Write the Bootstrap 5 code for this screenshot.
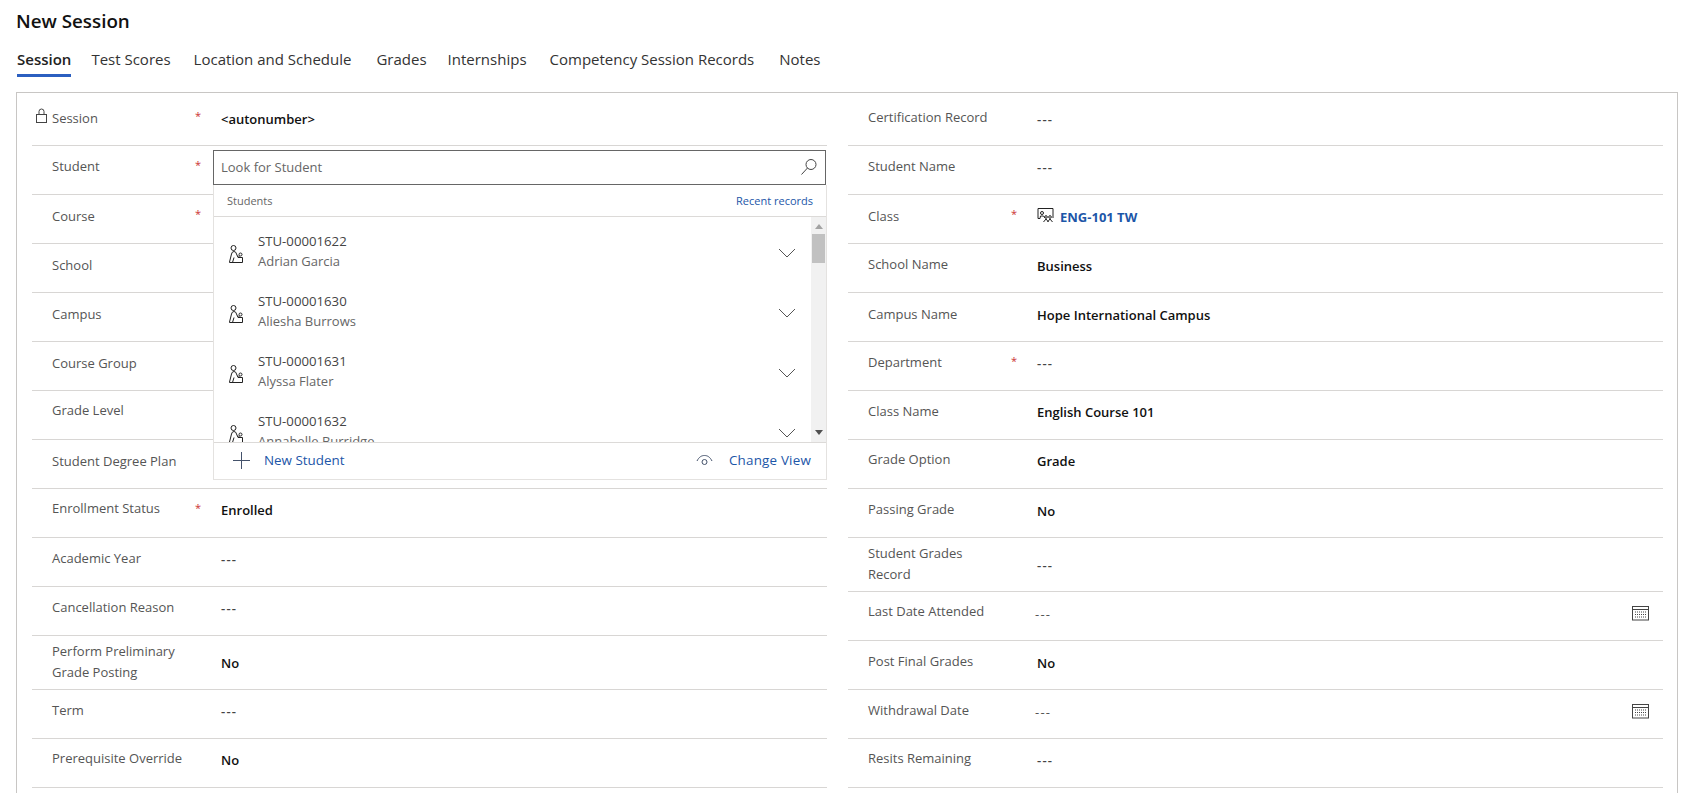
<!DOCTYPE html>
<html lang="en">
<head>
<meta charset="utf-8">
<title>New Session</title>
<link href="https://cdn.jsdelivr.net/npm/bootstrap@5.3.0/dist/css/bootstrap.min.css" rel="stylesheet">
<style>
html,body{height:100%;overflow:hidden;background:#fff;}
body{font-family:"Open Sans","Liberation Sans",sans-serif;font-size:13px;color:#000;padding:0 17px 0 16px;}
.page-title{font-size:18.800px;font-weight:600;color:#111;margin:0;padding-top:9px;line-height:25px;height:34px;}
.tabs{gap:20px;margin:9px 0 0 1px;height:48.500px;}
.tabs .nav-link{padding:0;color:#333;font-size:15px;line-height:20px;height:34px;padding-top:6px;border-radius:0;}
.tabs .nav-link.active{color:#222;font-weight:600;border-bottom:3px solid #2b5fc0;}
.t1{margin-left:1px;}.t2{margin-left:3px;}.t5{margin-left:5px;}
.sheet{border:1px solid #c8c6c4;border-radius:0;padding:4px 14px 0 15px;height:780px;}
.col-left{flex:0 0 795px;}
.col-right{flex:1 1 auto;margin-left:21px;}
.frow{height:49px;border-bottom:1px solid #d8d6d4;display:flex;position:relative;}
.frow.tall{height:54px;}
.lab{width:165px;flex:none;padding:11px 0 0 20px;line-height:20px;color:#555;position:relative;}
.lab.up1{padding-top:10px;}
.lab.up2{padding-top:9px;}
.tall .lab{padding:5px 20px 0 20px;line-height:21px;}
.lab svg{position:absolute;left:4px;top:11px;}
.req{width:16px;flex:none;color:#c33;font-size:11px;line-height:14px;padding-top:12px;margin-left:-2px;margin-right:2px;}
.fv{padding-top:12.500px;line-height:20px;padding-left:8px;font-weight:600;color:#111;font-size:13px;}
.fv.up{padding-top:11.500px;}
.fv.empty{color:#444;letter-spacing:1.200px;}
.tall .fv{padding-top:17px;}
.fv.inputish{font-weight:400;color:#555;padding-left:6px;letter-spacing:1.200px;padding-top:12px;}
.fv a{color:#1c56a8;text-decoration:none;font-weight:700;}
.link-gap{gap:6px;}
.cal{position:absolute;right:14px;top:13px;}
.lookup{position:absolute;left:181px;top:4px;width:614px;z-index:5;}
.look-input{height:35px;border:1px solid #666;display:flex;align-items:center;justify-content:space-between;padding:0 7px;color:#666;background:#fff;width:613px;}
.look-input span{padding-top:2px;}
.fly{width:614px;background:#fff;border:1px solid #e4e2e0;border-top:0;border-radius:0;}
.fly-head{height:32px;border-bottom:1px solid #dcdad8;padding:2px 13px 0;font-size:11px;color:#666;}
.fly-head a{color:#1c56a8;text-decoration:none;}
.fly-body{height:225px;overflow:hidden;}
.fly-list{flex:1 1 auto;padding-top:9px;min-width:0;}
.stu{height:60px;padding:0 15px 0 14px;display:flex;align-items:center;}
.stu-ic{flex:none;width:30px;margin-top:-3px;}
.stu-tx{line-height:20px;flex:1 1 auto;margin-top:-9px;}
.stu-id{color:#444;font-size:13.200px;}
.stu-nm{color:#666;}
.stu-ch{margin-top:-6px;}
.sbar{width:15px;flex:none;background:#f1f1f1;display:flex;flex-direction:column;align-items:center;}
.ar-up{width:0;height:0;border:4px solid transparent;border-top:0;border-bottom:5px solid #a3a3a3;margin-top:7px;}
.thumb{width:13px;height:29px;background:#c1c1c1;margin-top:5px;}
.ar-dn{width:0;height:0;border:4px solid transparent;border-bottom:0;border-top:5px solid #505050;margin-top:auto;margin-bottom:7px;}
.fly-foot{height:37px;border-top:1px solid #dcdad8;padding:0 15px 0 19px;color:#1c56a8;font-size:13.400px;}
.foot-gap{gap:14px;}
.foot-view{letter-spacing:.2px;}
</style>
</head>
<body>
<h1 class="page-title">New Session</h1>
<ul class="nav tabs">
  <li class="nav-item"><a class="nav-link active" href="#">Session</a></li>
  <li class="nav-item"><a class="nav-link" href="#">Test Scores</a></li>
  <li class="nav-item t2"><a class="nav-link" href="#">Location and Schedule</a></li>
  <li class="nav-item t5"><a class="nav-link" href="#">Grades</a></li>
  <li class="nav-item t1"><a class="nav-link" href="#">Internships</a></li>
  <li class="nav-item t2"><a class="nav-link" href="#">Competency Session Records</a></li>
  <li class="nav-item t5"><a class="nav-link" href="#">Notes</a></li>
</ul>
<div class="card sheet">
<div class="d-flex">
  <div class="col-left">
    <div class="frow"><div class="lab"><svg width="12" height="15" viewBox="0 0 12 15" fill="none" stroke="#444"><rect x=".5" y="6.500" width="10" height="8"/><path d="M3 6.500V3.500a2.500 2.500 0 0 1 5 0v3"/></svg>Session</div><div class="req">*</div><div class="fv">&lt;autonumber&gt;</div></div>
    <div class="frow"><div class="lab up1">Student</div><div class="req">*</div>
      <div class="lookup">
        <div class="look-input"><span>Look for Student</span><svg width="18" height="18" viewBox="0 0 18 18" fill="none" stroke="#444"><circle cx="11" cy="6.500" r="5"/><path d="M7.500 10 1.500 16.500"/></svg></div>
        <div class="card fly">
          <div class="fly-head d-flex justify-content-between align-items-center"><span>Students</span><a href="#">Recent records</a></div>
          <div class="fly-body d-flex">
            <div class="fly-list">
              <div class="stu"><div class="stu-ic"><svg width="16" height="19" viewBox="0 0 16 19" fill="none" stroke="#222"><circle cx="5.500" cy="3" r="2.500"/><path d="M1.500 17 3.500 9Q4 6.500 6 6.500T8.500 9L10 12.500h4.500V17.500H1.500ZM6 12.500 4.500 17.500"/><path d="M10 10.500 12 12.500"/><circle cx="12.500" cy="9.500" r="1.500"/></svg></div><div class="stu-tx"><div class="stu-id">STU-00001622</div><div class="stu-nm">Adrian Garcia</div></div><svg class="stu-ch" width="18" height="10" viewBox="0 0 18 10" fill="none" stroke="#555"><path d="M1 1l8 8 8-8"/></svg></div>
              <div class="stu"><div class="stu-ic"><svg width="16" height="19" viewBox="0 0 16 19" fill="none" stroke="#222"><circle cx="5.500" cy="3" r="2.500"/><path d="M1.500 17 3.500 9Q4 6.500 6 6.500T8.500 9L10 12.500h4.500V17.500H1.500ZM6 12.500 4.500 17.500"/><path d="M10 10.500 12 12.500"/><circle cx="12.500" cy="9.500" r="1.500"/></svg></div><div class="stu-tx"><div class="stu-id">STU-00001630</div><div class="stu-nm">Aliesha Burrows</div></div><svg class="stu-ch" width="18" height="10" viewBox="0 0 18 10" fill="none" stroke="#555"><path d="M1 1l8 8 8-8"/></svg></div>
              <div class="stu"><div class="stu-ic"><svg width="16" height="19" viewBox="0 0 16 19" fill="none" stroke="#222"><circle cx="5.500" cy="3" r="2.500"/><path d="M1.500 17 3.500 9Q4 6.500 6 6.500T8.500 9L10 12.500h4.500V17.500H1.500ZM6 12.500 4.500 17.500"/><path d="M10 10.500 12 12.500"/><circle cx="12.500" cy="9.500" r="1.500"/></svg></div><div class="stu-tx"><div class="stu-id">STU-00001631</div><div class="stu-nm">Alyssa Flater</div></div><svg class="stu-ch" width="18" height="10" viewBox="0 0 18 10" fill="none" stroke="#555"><path d="M1 1l8 8 8-8"/></svg></div>
              <div class="stu"><div class="stu-ic"><svg width="16" height="19" viewBox="0 0 16 19" fill="none" stroke="#222"><circle cx="5.500" cy="3" r="2.500"/><path d="M1.500 17 3.500 9Q4 6.500 6 6.500T8.500 9L10 12.500h4.500V17.500H1.500ZM6 12.500 4.500 17.500"/><path d="M10 10.500 12 12.500"/><circle cx="12.500" cy="9.500" r="1.500"/></svg></div><div class="stu-tx"><div class="stu-id">STU-00001632</div><div class="stu-nm">Annabelle Burridge</div></div><svg class="stu-ch" width="18" height="10" viewBox="0 0 18 10" fill="none" stroke="#555"><path d="M1 1l8 8 8-8"/></svg></div>
            </div>
            <div class="sbar"><div class="ar-up"></div><div class="thumb"></div><div class="ar-dn"></div></div>
          </div>
          <div class="fly-foot d-flex justify-content-between align-items-center">
            <span class="d-flex align-items-center foot-gap"><svg width="17" height="17" viewBox="0 0 17 17" fill="none" stroke="#44526b"><path d="M8.500 0v17M0 8.500h17"/></svg>New Student</span>
            <span class="d-flex align-items-center gap-3 foot-view"><svg width="17" height="12" viewBox="0 0 17 12" fill="none" stroke="#44526b"><path d="M1 7C3 3 5.500 1.500 8.500 1.500S14 3 16 7"/><circle cx="8.500" cy="8" r="2.500"/></svg>Change View</span>
          </div>
        </div>
      </div>
    </div>
    <div class="frow"><div class="lab">Course</div><div class="req">*</div></div>
    <div class="frow"><div class="lab">School</div></div>
    <div class="frow"><div class="lab">Campus</div></div>
    <div class="frow"><div class="lab">Course Group</div></div>
    <div class="frow"><div class="lab up2">Grade Level</div></div>
    <div class="frow"><div class="lab">Student Degree Plan</div></div>
    <div class="frow"><div class="lab up2">Enrollment Status</div><div class="req">*</div><div class="fv up">Enrolled</div></div>
    <div class="frow"><div class="lab up1">Academic Year</div><div class="req"></div><div class="fv empty up">---</div></div>
    <div class="frow"><div class="lab up1">Cancellation Reason</div><div class="req"></div><div class="fv empty up">---</div></div>
    <div class="frow tall"><div class="lab">Perform Preliminary Grade Posting</div><div class="req"></div><div class="fv">No</div></div>
    <div class="frow"><div class="lab up1">Term</div><div class="req"></div><div class="fv empty up">---</div></div>
    <div class="frow"><div class="lab up2">Prerequisite Override</div><div class="req"></div><div class="fv up">No</div></div>
  </div>
  <div class="col-right">
    <div class="frow"><div class="lab up1">Certification Record</div><div class="req"></div><div class="fv empty">---</div></div>
    <div class="frow"><div class="lab up1">Student Name</div><div class="req"></div><div class="fv empty up">---</div></div>
    <div class="frow"><div class="lab">Class</div><div class="req">*</div><div class="fv d-flex align-items-start link-gap"><svg width="17" height="16" viewBox="0 0 17 16" fill="none" stroke="#222"><path d="M3 11.500H1V1.500h15V11"/><circle cx="5" cy="6" r="1.500"/><path d="M3 11.500 3.500 9h3L8 11"/><circle cx="9" cy="10" r="1.300"/><circle cx="13" cy="10" r="1.300"/><path d="M6.500 15 9 12l2.500 3M10.500 15 13 12l2.500 3"/></svg><a href="#">ENG-101 TW</a></div></div>
    <div class="frow"><div class="lab up1">School Name</div><div class="req"></div><div class="fv">Business</div></div>
    <div class="frow"><div class="lab">Campus Name</div><div class="req"></div><div class="fv">Hope International Campus</div></div>
    <div class="frow"><div class="lab up1">Department</div><div class="req">*</div><div class="fv empty up">---</div></div>
    <div class="frow"><div class="lab up1">Class Name</div><div class="req"></div><div class="fv up">English Course 101</div></div>
    <div class="frow"><div class="lab up2">Grade Option</div><div class="req"></div><div class="fv up">Grade</div></div>
    <div class="frow"><div class="lab up1">Passing Grade</div><div class="req"></div><div class="fv">No</div></div>
    <div class="frow tall"><div class="lab">Student Grades Record</div><div class="req"></div><div class="fv empty">---</div></div>
    <div class="frow"><div class="lab up2">Last Date Attended</div><div class="req"></div><div class="fv inputish">---</div><svg class="cal" width="17" height="16" viewBox="0 0 17 16" fill="none" stroke="#444"><rect x=".5" y="1.500" width="16" height="13.500"/><path d="M.5 4.500h16"/><path stroke-dasharray="1 1" d="M3 7h11M3 9.500h11M3 12h11"/></svg></div>
    <div class="frow"><div class="lab up1">Post Final Grades</div><div class="req"></div><div class="fv">No</div></div>
    <div class="frow"><div class="lab up1">Withdrawal Date</div><div class="req"></div><div class="fv inputish">---</div><svg class="cal" width="17" height="16" viewBox="0 0 17 16" fill="none" stroke="#444"><rect x=".5" y="1.500" width="16" height="13.500"/><path d="M.5 4.500h16"/><path stroke-dasharray="1 1" d="M3 7h11M3 9.500h11M3 12h11"/></svg></div>
    <div class="frow"><div class="lab up2">Resits Remaining</div><div class="req"></div><div class="fv empty up">---</div></div>
  </div>
</div>
</div>
<script src="https://cdn.jsdelivr.net/npm/bootstrap@5.3.0/dist/js/bootstrap.bundle.min.js"></script>
</body>
</html>
